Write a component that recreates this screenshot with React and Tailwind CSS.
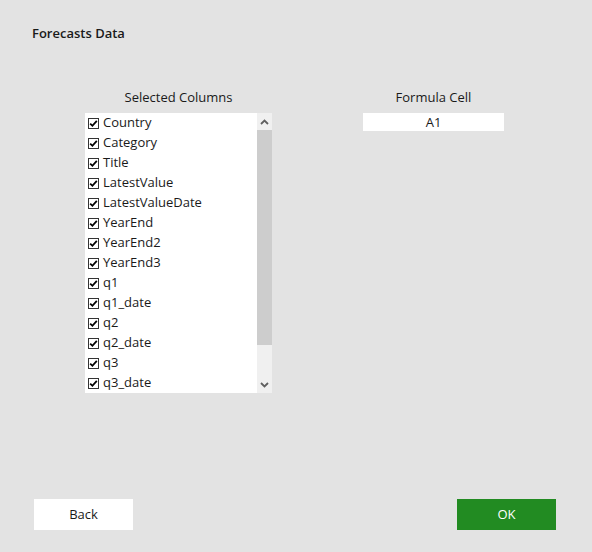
import React from 'react';

const columns = [
  'Country',
  'Category',
  'Title',
  'LatestValue',
  'LatestValueDate',
  'YearEnd',
  'YearEnd2',
  'YearEnd3',
  'q1',
  'q1_date',
  'q2',
  'q2_date',
  'q3',
  'q3_date',
];

const CheckBox = () => (
  <span className="w-[11px] h-[11px] border border-[#333] bg-white flex items-center justify-center shrink-0">
    <svg width="9" height="9" viewBox="0 0 9 9">
      <path d="M1.2 4.6 L3.4 6.8 L7.8 1.8" fill="none" stroke="#000" strokeWidth="1.8" />
    </svg>
  </span>
);

const Chevron = ({ up }) => (
  <svg width="9" height="6" viewBox="0 0 9 6">
    <path
      d={up ? 'M1 5 L4.5 1.5 L8 5' : 'M1 1 L4.5 4.5 L8 1'}
      fill="none"
      stroke="#606060"
      strokeWidth="1.8"
    />
  </svg>
);

export default function App() {
  return (
    <div
      className="w-[592px] h-[552px] bg-[#e3e3e3] flex flex-col text-[13px] text-[#1a1a1a]"
      style={{ fontFamily: '"Open Sans", "Noto Sans", sans-serif' }}
    >
      <div className="pl-[32px] pt-[24px] leading-[18px] font-semibold">Forecasts Data</div>

      <div className="flex mt-[46px] pl-[85px]">
        <div className="w-[187px] flex flex-col">
          <div className="text-center leading-[18px] mb-[7px]">Selected Columns</div>
          <div className="h-[280px] bg-white flex">
            <div className="flex-1 flex flex-col">
              {columns.map((c) => (
                <div key={c} className="h-[20px] flex items-center pl-[3px] gap-[4px] pb-[2px]">
                  <span className="mt-[2px]">
                    <CheckBox />
                  </span>
                  <span className="leading-[18px]">{c}</span>
                </div>
              ))}
            </div>
            <div className="w-[15px] bg-[#f0f0f0] flex flex-col">
              <div className="h-[17px] flex items-center justify-center">
                <Chevron up />
              </div>
              <div className="h-[215px] bg-[#cdcdcd]" />
              <div className="flex-1" />
              <div className="h-[17px] flex items-center justify-center">
                <Chevron />
              </div>
            </div>
          </div>
        </div>

        <div className="w-[141px] ml-[91px] flex flex-col">
          <div className="text-center leading-[18px] mb-[7px]">Formula Cell</div>
          <div className="h-[18px] bg-white text-center leading-[18px]">A1</div>
        </div>
      </div>

      <div className="mt-auto flex justify-between pl-[34px] pr-[36px] pb-[22px]">
        <button className="w-[99px] h-[31px] bg-white text-[13px] text-[#1a1a1a]">Back</button>
        <button className="w-[99px] h-[31px] bg-[#228b22] text-[13px] text-white">OK</button>
      </div>
    </div>
  );
}
